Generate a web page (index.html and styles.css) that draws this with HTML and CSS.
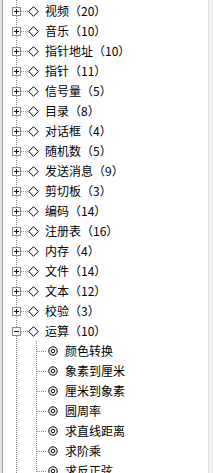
FILE: index.html
```html
<!DOCTYPE html>
<html lang="zh-CN">
<head>
<meta charset="utf-8">
<title>tree</title>
<link rel="stylesheet" href="styles.css">
</head>
<body>
<div class="frame">
  <div class="tree">
    <div class="node"><svg class="tg" width="9" height="9" viewBox="0 0 9 9"><rect x="0.5" y="0.5" width="8" height="8" fill="#fff" stroke="#8a8a8a"/><path d="M2 4.5h5M4.5 2v5" stroke="#1a1a1a"/></svg><span class="hl"></span><svg class="dia" width="11" height="11" viewBox="0 0 11 11"><path d="M5.5 0.7L10.3 5.5L5.5 10.3L0.7 5.5Z" fill="none" stroke="#000"/></svg><span class="lbl">视频（20）</span></div>
    <div class="node"><svg class="tg" width="9" height="9" viewBox="0 0 9 9"><rect x="0.5" y="0.5" width="8" height="8" fill="#fff" stroke="#8a8a8a"/><path d="M2 4.5h5M4.5 2v5" stroke="#1a1a1a"/></svg><span class="hl"></span><svg class="dia" width="11" height="11" viewBox="0 0 11 11"><path d="M5.5 0.7L10.3 5.5L5.5 10.3L0.7 5.5Z" fill="none" stroke="#000"/></svg><span class="lbl">音乐（10）</span></div>
    <div class="node"><svg class="tg" width="9" height="9" viewBox="0 0 9 9"><rect x="0.5" y="0.5" width="8" height="8" fill="#fff" stroke="#8a8a8a"/><path d="M2 4.5h5M4.5 2v5" stroke="#1a1a1a"/></svg><span class="hl"></span><svg class="dia" width="11" height="11" viewBox="0 0 11 11"><path d="M5.5 0.7L10.3 5.5L5.5 10.3L0.7 5.5Z" fill="none" stroke="#000"/></svg><span class="lbl">指针地址（10）</span></div>
    <div class="node"><svg class="tg" width="9" height="9" viewBox="0 0 9 9"><rect x="0.5" y="0.5" width="8" height="8" fill="#fff" stroke="#8a8a8a"/><path d="M2 4.5h5M4.5 2v5" stroke="#1a1a1a"/></svg><span class="hl"></span><svg class="dia" width="11" height="11" viewBox="0 0 11 11"><path d="M5.5 0.7L10.3 5.5L5.5 10.3L0.7 5.5Z" fill="none" stroke="#000"/></svg><span class="lbl">指针（11）</span></div>
    <div class="node"><svg class="tg" width="9" height="9" viewBox="0 0 9 9"><rect x="0.5" y="0.5" width="8" height="8" fill="#fff" stroke="#8a8a8a"/><path d="M2 4.5h5M4.5 2v5" stroke="#1a1a1a"/></svg><span class="hl"></span><svg class="dia" width="11" height="11" viewBox="0 0 11 11"><path d="M5.5 0.7L10.3 5.5L5.5 10.3L0.7 5.5Z" fill="none" stroke="#000"/></svg><span class="lbl">信号量（5）</span></div>
    <div class="node"><svg class="tg" width="9" height="9" viewBox="0 0 9 9"><rect x="0.5" y="0.5" width="8" height="8" fill="#fff" stroke="#8a8a8a"/><path d="M2 4.5h5M4.5 2v5" stroke="#1a1a1a"/></svg><span class="hl"></span><svg class="dia" width="11" height="11" viewBox="0 0 11 11"><path d="M5.5 0.7L10.3 5.5L5.5 10.3L0.7 5.5Z" fill="none" stroke="#000"/></svg><span class="lbl">目录（8）</span></div>
    <div class="node"><svg class="tg" width="9" height="9" viewBox="0 0 9 9"><rect x="0.5" y="0.5" width="8" height="8" fill="#fff" stroke="#8a8a8a"/><path d="M2 4.5h5M4.5 2v5" stroke="#1a1a1a"/></svg><span class="hl"></span><svg class="dia" width="11" height="11" viewBox="0 0 11 11"><path d="M5.5 0.7L10.3 5.5L5.5 10.3L0.7 5.5Z" fill="none" stroke="#000"/></svg><span class="lbl">对话框（4）</span></div>
    <div class="node"><svg class="tg" width="9" height="9" viewBox="0 0 9 9"><rect x="0.5" y="0.5" width="8" height="8" fill="#fff" stroke="#8a8a8a"/><path d="M2 4.5h5M4.5 2v5" stroke="#1a1a1a"/></svg><span class="hl"></span><svg class="dia" width="11" height="11" viewBox="0 0 11 11"><path d="M5.5 0.7L10.3 5.5L5.5 10.3L0.7 5.5Z" fill="none" stroke="#000"/></svg><span class="lbl">随机数（5）</span></div>
    <div class="node"><svg class="tg" width="9" height="9" viewBox="0 0 9 9"><rect x="0.5" y="0.5" width="8" height="8" fill="#fff" stroke="#8a8a8a"/><path d="M2 4.5h5M4.5 2v5" stroke="#1a1a1a"/></svg><span class="hl"></span><svg class="dia" width="11" height="11" viewBox="0 0 11 11"><path d="M5.5 0.7L10.3 5.5L5.5 10.3L0.7 5.5Z" fill="none" stroke="#000"/></svg><span class="lbl">发送消息（9）</span></div>
    <div class="node"><svg class="tg" width="9" height="9" viewBox="0 0 9 9"><rect x="0.5" y="0.5" width="8" height="8" fill="#fff" stroke="#8a8a8a"/><path d="M2 4.5h5M4.5 2v5" stroke="#1a1a1a"/></svg><span class="hl"></span><svg class="dia" width="11" height="11" viewBox="0 0 11 11"><path d="M5.5 0.7L10.3 5.5L5.5 10.3L0.7 5.5Z" fill="none" stroke="#000"/></svg><span class="lbl">剪切板（3）</span></div>
    <div class="node"><svg class="tg" width="9" height="9" viewBox="0 0 9 9"><rect x="0.5" y="0.5" width="8" height="8" fill="#fff" stroke="#8a8a8a"/><path d="M2 4.5h5M4.5 2v5" stroke="#1a1a1a"/></svg><span class="hl"></span><svg class="dia" width="11" height="11" viewBox="0 0 11 11"><path d="M5.5 0.7L10.3 5.5L5.5 10.3L0.7 5.5Z" fill="none" stroke="#000"/></svg><span class="lbl">编码（14）</span></div>
    <div class="node"><svg class="tg" width="9" height="9" viewBox="0 0 9 9"><rect x="0.5" y="0.5" width="8" height="8" fill="#fff" stroke="#8a8a8a"/><path d="M2 4.5h5M4.5 2v5" stroke="#1a1a1a"/></svg><span class="hl"></span><svg class="dia" width="11" height="11" viewBox="0 0 11 11"><path d="M5.5 0.7L10.3 5.5L5.5 10.3L0.7 5.5Z" fill="none" stroke="#000"/></svg><span class="lbl">注册表（16）</span></div>
    <div class="node"><svg class="tg" width="9" height="9" viewBox="0 0 9 9"><rect x="0.5" y="0.5" width="8" height="8" fill="#fff" stroke="#8a8a8a"/><path d="M2 4.5h5M4.5 2v5" stroke="#1a1a1a"/></svg><span class="hl"></span><svg class="dia" width="11" height="11" viewBox="0 0 11 11"><path d="M5.5 0.7L10.3 5.5L5.5 10.3L0.7 5.5Z" fill="none" stroke="#000"/></svg><span class="lbl">内存（4）</span></div>
    <div class="node"><svg class="tg" width="9" height="9" viewBox="0 0 9 9"><rect x="0.5" y="0.5" width="8" height="8" fill="#fff" stroke="#8a8a8a"/><path d="M2 4.5h5M4.5 2v5" stroke="#1a1a1a"/></svg><span class="hl"></span><svg class="dia" width="11" height="11" viewBox="0 0 11 11"><path d="M5.5 0.7L10.3 5.5L5.5 10.3L0.7 5.5Z" fill="none" stroke="#000"/></svg><span class="lbl">文件（14）</span></div>
    <div class="node"><svg class="tg" width="9" height="9" viewBox="0 0 9 9"><rect x="0.5" y="0.5" width="8" height="8" fill="#fff" stroke="#8a8a8a"/><path d="M2 4.5h5M4.5 2v5" stroke="#1a1a1a"/></svg><span class="hl"></span><svg class="dia" width="11" height="11" viewBox="0 0 11 11"><path d="M5.5 0.7L10.3 5.5L5.5 10.3L0.7 5.5Z" fill="none" stroke="#000"/></svg><span class="lbl">文本（12）</span></div>
    <div class="node"><svg class="tg" width="9" height="9" viewBox="0 0 9 9"><rect x="0.5" y="0.5" width="8" height="8" fill="#fff" stroke="#8a8a8a"/><path d="M2 4.5h5M4.5 2v5" stroke="#1a1a1a"/></svg><span class="hl"></span><svg class="dia" width="11" height="11" viewBox="0 0 11 11"><path d="M5.5 0.7L10.3 5.5L5.5 10.3L0.7 5.5Z" fill="none" stroke="#000"/></svg><span class="lbl">校验（3）</span></div>
    <div class="node"><svg class="tg" width="9" height="9" viewBox="0 0 9 9"><rect x="0.5" y="0.5" width="8" height="8" fill="#fff" stroke="#8a8a8a"/><path d="M2 4.5h5" stroke="#1a1a1a"/></svg><span class="hl"></span><svg class="dia" width="11" height="11" viewBox="0 0 11 11"><path d="M5.5 0.7L10.3 5.5L5.5 10.3L0.7 5.5Z" fill="none" stroke="#000"/></svg><span class="lbl">运算（10）</span></div>
    <div class="children">
      <div class="leaf"><span class="hl2"></span><svg class="dc" width="10" height="10" viewBox="0 0 10 10"><circle cx="5" cy="5" r="4.2" fill="none" stroke="#000"/><circle cx="5" cy="5" r="1.8" fill="none" stroke="#000"/></svg><span class="lbl">颜色转换</span></div>
      <div class="leaf"><span class="hl2"></span><svg class="dc" width="10" height="10" viewBox="0 0 10 10"><circle cx="5" cy="5" r="4.2" fill="none" stroke="#000"/><circle cx="5" cy="5" r="1.8" fill="none" stroke="#000"/></svg><span class="lbl">象素到厘米</span></div>
      <div class="leaf"><span class="hl2"></span><svg class="dc" width="10" height="10" viewBox="0 0 10 10"><circle cx="5" cy="5" r="4.2" fill="none" stroke="#000"/><circle cx="5" cy="5" r="1.8" fill="none" stroke="#000"/></svg><span class="lbl">厘米到象素</span></div>
      <div class="leaf"><span class="hl2"></span><svg class="dc" width="10" height="10" viewBox="0 0 10 10"><circle cx="5" cy="5" r="4.2" fill="none" stroke="#000"/><circle cx="5" cy="5" r="1.8" fill="none" stroke="#000"/></svg><span class="lbl">圆周率</span></div>
      <div class="leaf"><span class="hl2"></span><svg class="dc" width="10" height="10" viewBox="0 0 10 10"><circle cx="5" cy="5" r="4.2" fill="none" stroke="#000"/><circle cx="5" cy="5" r="1.8" fill="none" stroke="#000"/></svg><span class="lbl">求直线距离</span></div>
      <div class="leaf"><span class="hl2"></span><svg class="dc" width="10" height="10" viewBox="0 0 10 10"><circle cx="5" cy="5" r="4.2" fill="none" stroke="#000"/><circle cx="5" cy="5" r="1.8" fill="none" stroke="#000"/></svg><span class="lbl">求阶乘</span></div>
      <div class="leaf"><span class="hl2"></span><svg class="dc" width="10" height="10" viewBox="0 0 10 10"><circle cx="5" cy="5" r="4.2" fill="none" stroke="#000"/><circle cx="5" cy="5" r="1.8" fill="none" stroke="#000"/></svg><span class="lbl">求反正弦</span></div>
    </div>
  </div>
  <div class="sb"></div>
</div>
</body>
</html>
```

FILE: styles.css
```css
html, body {
  margin: 0;
  padding: 0;
  background: #fff;
}
body {
  width: 213px;
  height: 473px;
  overflow: hidden;
  font-family: "Noto Sans CJK SC", "Liberation Sans", sans-serif;
  font-size: 12px;
  color: #000;
}
.frame {
  display: flex;
  height: 473px;
  border-left: 2px solid #e6e6e6;
  box-sizing: border-box;
}
.tree {
  flex: 1;
  border-left: 1px solid #a0a0a0;
  padding-top: 1px;
  overflow: hidden;
  background-image: repeating-linear-gradient(to bottom, #8c8c8c 0 1px, transparent 1px 2px);
  background-size: 1px 100%;
  background-position: 13px 0;
  background-repeat: no-repeat;
}
.node, .leaf {
  display: flex;
  align-items: center;
  height: 20px;
  white-space: nowrap;
}
.tg {
  flex: none;
  margin-left: 9px;
  display: block;
}
.hl {
  flex: none;
  width: 7px;
  height: 1px;
  background-image: repeating-linear-gradient(to right, #8c8c8c 0 1px, transparent 1px 2px);
}
.dia {
  flex: none;
  display: block;
  margin-right: 6px;
}
.children {
  background-image: repeating-linear-gradient(to bottom, #8c8c8c 0 1px, transparent 1px 2px);
  background-size: 1px 100%;
  background-position: 33px 0;
  background-repeat: no-repeat;
}
.hl2 {
  flex: none;
  width: 10px;
  height: 1px;
  margin-left: 34px;
  background-image: repeating-linear-gradient(to right, #8c8c8c 0 1px, transparent 1px 2px);
}
.dc {
  flex: none;
  display: block;
  margin-left: 1px;
  margin-right: 7px;
}
.lbl {
  line-height: 20px;
}
.sb {
  flex: none;
  width: 4px;
  background: #f0f0f0;
  border-left: 1px solid #dcdcdc;
}
```
